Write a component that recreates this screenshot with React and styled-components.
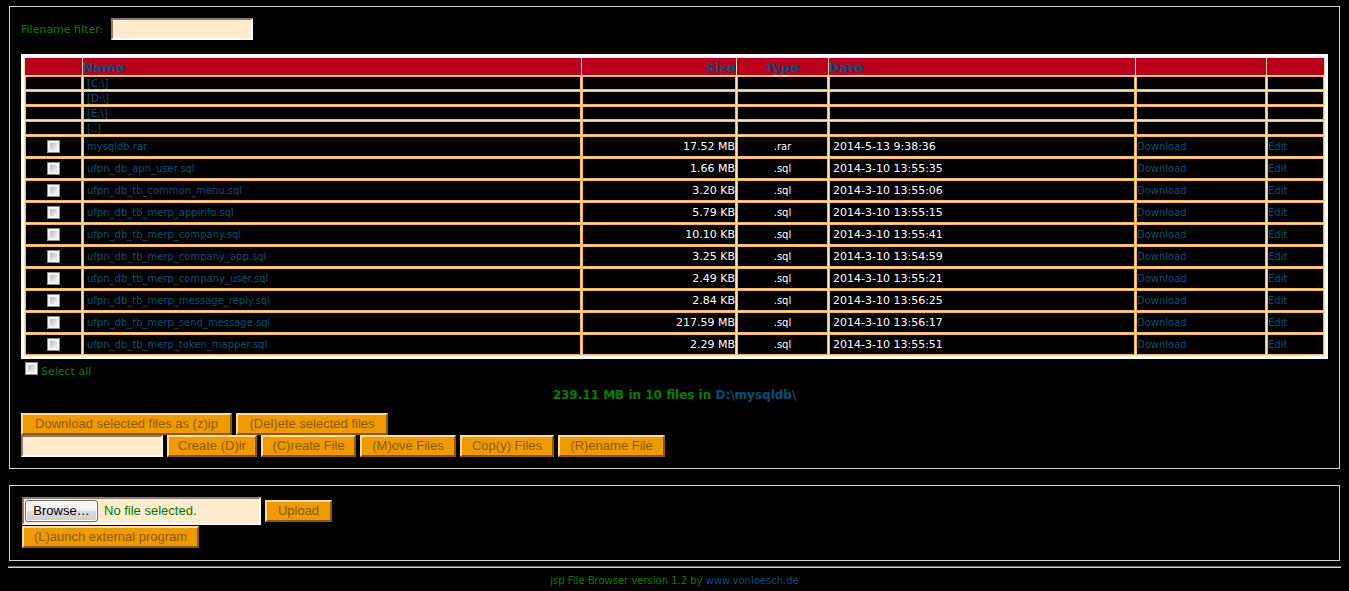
import React from "react";
import styled, { createGlobalStyle } from "styled-components";

const color = {
  text: "#008000",
  link: "#005078",
  line: "#d3d3d3",
  header: "#bc001c",
  cellBorder: "#fcb650",
  grid: "#fde2b8",
  field: "#ffebcd",
  button: "#ee9a00",
};

const GlobalStyle = createGlobalStyle`
  * { box-sizing: border-box; }
  body {
    margin: 6px 8px 0;
    background: #000;
    color: ${color.text};
    font: 11px/14px Verdana, "DejaVu Sans", sans-serif;
  }
`;

const Panel = styled.form`
  margin: 0 1px 16px;
  padding: 11px;
  border: 1px solid ${color.line};
`;

const UploadPanel = styled(Panel)`
  display: grid;
  gap: 1px;
  padding: 11px 12px 12px;
`;

const Link = styled.a`
  color: ${color.link};
  text-decoration: none;
`;

const TextField = styled.input`
  width: 142px;
  height: 22px;
  padding: 1px 2px;
  border: 2px solid;
  border-color: #8b7d6b #fffaf0 #fffaf0 #8b7d6b;
  border-radius: 0;
  background: ${color.field};
  color: ${color.text};
  font: 13px "Liberation Sans", Arial, sans-serif;
`;

const FilterRow = styled.label`
  display: flex;
  align-items: flex-start;
  gap: 8px;
  margin-bottom: 12px;
  line-height: 24px;
`;

const FileTable = styled.table`
  width: 100%;
  table-layout: fixed;
  border: 3px solid #fff;
  border-spacing: 1px;
  background: ${color.grid};
  font-size: 10px;
  line-height: 12px;
`;

const Col = styled.col`
  width: ${(p) => (p.$w ? `${p.$w}px` : "auto")};
`;

const HeadCell = styled.th`
  height: 17px;
  padding: 2px 0 0;
  background: ${color.header};
  font-size: 13px;
  line-height: 15px;
  text-align: ${(p) => p.$align || "left"};
`;

const Cell = styled.td`
  height: 21px;
  padding: 0 ${(p) => (p.$inset ? 3 : 0)}px;
  border: 1px solid ${color.cellBorder};
  background: #000;
  color: #fff;
  font-size: ${(p) => (p.$figures ? 11 : 10)}px;
  text-align: ${(p) => p.$align || "left"};
  vertical-align: middle;
`;

const DriveCell = styled(Cell)`
  height: 14px;
  padding-top: 2px;
  line-height: 10px;
`;

const Checkbox = styled.input.attrs({ type: "checkbox" })`
  appearance: none;
  display: block;
  width: 13px;
  height: 13px;
  margin: ${(p) => (p.$centered ? "0 auto" : "0")};
  border: 1px solid #8e8f8f;
  background: linear-gradient(135deg, #b8bcc6, #f6f6f6) content-box, #f4f4f4;
  padding: 2px;
`;

const SelectAll = styled.label`
  display: flex;
  align-items: flex-start;
  gap: 3px;
  margin: 3px 0 0 4px;
  line-height: 20px;
`;

const Summary = styled.p`
  margin: 6px 0 11px;
  font-size: 12px;
  font-weight: bold;
  text-align: center;
`;

const Row = styled.div`
  display: flex;
  align-items: center;
  gap: 4px;
`;

const Button = styled.button`
  width: ${(p) => p.$w}px;
  height: 22px;
  padding: 0;
  border: 2px solid;
  border-color: #ffdb9b #8b5a00 #8b5a00 #ffdb9b;
  border-radius: 0;
  background: ${color.button};
  color: #8b5a00;
  font: 13px/18px "Liberation Sans", Arial, sans-serif;
  white-space: nowrap;
`;

const FilePicker = styled.label`
  position: relative;
  display: flex;
  align-items: center;
  gap: 6px;
  width: 239px;
  height: 28px;
  padding: 0 1px;
  border: 2px solid;
  border-color: #8b7d6b #fffaf0 #fffaf0 #8b7d6b;
  background: ${color.field};
  font: 13px/18px "Liberation Sans", Arial, sans-serif;
`;

const HiddenFile = styled.input.attrs({ type: "file" })`
  position: absolute;
  inset: 0;
  width: 100%;
  opacity: 0;
`;

const Browse = styled.span`
  width: 73px;
  height: 22px;
  border: 1px solid #707070;
  border-radius: 3px;
  box-shadow: inset 0 0 0 1px #fcfcfc;
  background: linear-gradient(#f2f2f2 0 50%, #dddddd 50%, #cfcfcf);
  color: #000;
  line-height: 20px;
  text-align: center;
`;

const Rule = styled.hr`
  margin: -11px 0 0;
  height: 2px;
  border: 0;
  border-top: 1px solid #707070;
  background: ${color.line};
`;

const Footer = styled.footer`
  padding: 6px 0 3px;
  font-size: 10px;
  text-align: center;
`;

const columns = [57, null, 154, 91, 306, 130, 57];
const drives = ["[C:\\]", "[D:\\]", "[E:\\]", "[..]"];
const files = [
  ["mysqldb.rar", "17.52 MB", ".rar", "2014-5-13 9:38:36"],
  ["ufpn_db_apn_user.sql", "1.66 MB", ".sql", "2014-3-10 13:55:35"],
  ["ufpn_db_tb_common_menu.sql", "3.20 KB", ".sql", "2014-3-10 13:55:06"],
  ["ufpn_db_tb_merp_appinfo.sql", "5.79 KB", ".sql", "2014-3-10 13:55:15"],
  ["ufpn_db_tb_merp_company.sql", "10.10 KB", ".sql", "2014-3-10 13:55:41"],
  ["ufpn_db_tb_merp_company_app.sql", "3.25 KB", ".sql", "2014-3-10 13:54:59"],
  ["ufpn_db_tb_merp_company_user.sql", "2.49 KB", ".sql", "2014-3-10 13:55:21"],
  ["ufpn_db_tb_merp_message_reply.sql", "2.84 KB", ".sql", "2014-3-10 13:56:25"],
  ["ufpn_db_tb_merp_send_message.sql", "217.59 MB", ".sql", "2014-3-10 13:56:17"],
  ["ufpn_db_tb_merp_token_mapper.sql", "2.29 MB", ".sql", "2014-3-10 13:55:51"],
];
const fileActions = [
  ["Create (D)ir", 90],
  ["(C)reate File", 95],
  ["(M)ove Files", 96],
  ["Cop(y) Files", 94],
  ["(R)ename File", 107],
];

export default function App() {
  return (
    <>
      <GlobalStyle />
      <Panel>
        <FilterRow>
          Filename filter:
          <TextField type="text" />
        </FilterRow>
        <FileTable>
          <colgroup>
            {columns.map((w, i) => (
              <Col key={i} $w={w} />
            ))}
          </colgroup>
          <thead>
            <tr>
              <HeadCell />
              <HeadCell><Link href="#name">Name</Link></HeadCell>
              <HeadCell $align="right"><Link href="#size">Size</Link></HeadCell>
              <HeadCell $align="center"><Link href="#type">Type</Link></HeadCell>
              <HeadCell><Link href="#date">Date</Link></HeadCell>
              <HeadCell />
              <HeadCell />
            </tr>
          </thead>
          <tbody>
            {drives.map((d) => (
              <tr key={d}>
                <DriveCell />
                <DriveCell $inset><Link href="#dir">{d}</Link></DriveCell>
                <DriveCell />
                <DriveCell />
                <DriveCell />
                <DriveCell />
                <DriveCell />
              </tr>
            ))}
            {files.map(([name, size, type, date]) => (
              <tr key={name}>
                <Cell><Checkbox $centered aria-label={name} /></Cell>
                <Cell $inset><Link href="#file">{name}</Link></Cell>
                <Cell $figures $align="right">{size}</Cell>
                <Cell $align="center">{type}</Cell>
                <Cell $figures $inset>{date}</Cell>
                <Cell><Link href="#download">Download</Link></Cell>
                <Cell><Link href="#edit">Edit</Link></Cell>
              </tr>
            ))}
          </tbody>
        </FileTable>
        <SelectAll>
          <Checkbox />
          Select all
        </SelectAll>
        <Summary>
          239.11 MB in 10 files in <Link href="#dir">D:\mysqldb\</Link>
        </Summary>
        <Row>
          <Button type="button" $w={211}>Download selected files as (z)ip</Button>
          <Button type="button" $w={152}>(Del)ete selected files</Button>
        </Row>
        <Row>
          <TextField type="text" aria-label="New name" />
          {fileActions.map(([label, w]) => (
            <Button type="button" key={label} $w={w}>{label}</Button>
          ))}
        </Row>
      </Panel>
      <UploadPanel>
        <Row>
          <FilePicker>
            <HiddenFile />
            <Browse>Browse…</Browse>
            No file selected.
          </FilePicker>
          <Button type="button" $w={67}>Upload</Button>
        </Row>
        <Row>
          <Button type="button" $w={177}>(L)aunch external program</Button>
        </Row>
      </UploadPanel>
      <Rule />
      <Footer>
        jsp File Browser version 1.2 by <Link href="#home">www.vonloesch.de</Link>
      </Footer>
    </>
  );
}
